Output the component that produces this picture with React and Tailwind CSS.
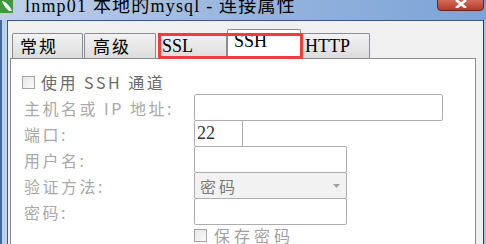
import React from 'react';

const serif = "font-['Liberation_Serif','Noto_Sans_CJK_SC',serif]";
const cjk = "font-['Noto_Sans_CJK_SC','Noto_Sans',sans-serif]";

const Tab = ({ label, className = '', textClass = '' }) => (
  <div
    className={`h-[25px] border border-b-0 border-[#898c95] rounded-t-[2px] bg-gradient-to-b from-[#f3f3f3] to-[#dcdcdc] text-black ${className}`}
  >
    <div className={`leading-[18px] ${textClass}`}>{label}</div>
  </div>
);

const Field = ({ label, children, className = '' }) => (
  <div className={`flex items-center ${className}`}>
    <div className={`w-[170px] shrink-0 text-[16px] tracking-[2.5px] text-[#a8a8a8] leading-[20px] ${cjk}`}>{label}</div>
    {children}
  </div>
);

const Box = ({ className = '' }) => (
  <div className={`h-[13px] w-[13px] border border-[#a4a4a4] bg-gradient-to-br from-[#e6e6e6] to-[#fbfbfb] ${className}`} />
);

export default function App() {
  return (
    <div className="w-[486px] h-[244px] overflow-hidden flex flex-col bg-gradient-to-r from-[#bfd1e9] via-[#97b5dc] to-[#7ca4d8]">
      {/* title bar */}
      <div className="relative h-[20px] shrink-0 flex items-start">
        <svg width="13" height="13" viewBox="0 0 13 13" className="shrink-0">
          <rect x="0" y="0" width="13" height="13" fill="#3f9a3a" />
          <path d="M2 1 C6 2 10 6 12 11 L9 11 C6 8 3 5 2 1 Z" fill="#ffffff" />
        </svg>
        <div className={`ml-[12px] -mt-[3px] text-[18px] leading-[18px] tracking-[1.2px] text-black ${serif}`}>
          lnmp01 本地的mysql - 连接属性
        </div>
        <div className="absolute right-[2px] top-[-2px] w-[47px] h-[13px] rounded-b-[4px] border border-[#6e2418] bg-gradient-to-b from-[#d97060] to-[#b23a26] flex justify-center">
          <svg width="12" height="8" viewBox="0 0 12 8" className="mt-[1px]">
            <path d="M1 0 L11 8 M11 0 L1 8" stroke="#ffffff" strokeWidth="2.6" />
          </svg>
        </div>
      </div>

      {/* body */}
      <div className="flex-1 flex min-h-0">
        <div className="w-[7px] shrink-0 border-l-2 border-[#4468a4] bg-[#bcd0e8]" />
        <div className="flex-1 flex flex-col border-l border-t border-[#3b5a8c] bg-[#f0f0f0] pl-[2px] pr-[7px] pt-[8px]">
          {/* tabs */}
          <div className={`relative z-10 flex items-end h-[29px] ml-[2px] text-[16px] ${serif}`}>
            <Tab label="常规" className="w-[71px]" textClass={`pl-[7px] pt-[3px] text-[17px] tracking-[2px] ${cjk}`} />
            <Tab label="高级" className="w-[72px] ml-[1px]" textClass={`pl-[8px] pt-[3px] text-[17px] tracking-[2px] ${cjk}`} />
            <Tab label="SSL" className="w-[69px] ml-[2px]" textClass="pl-[3px] pt-[3px] text-[18px]" />
            <div className="w-[74px] h-[30px] -mb-[1px] border border-b-0 border-[#898c95] rounded-t-[2px] bg-white">
              <div className="leading-[18px] pl-[6px] pt-[2px] text-[18px]">SSH</div>
            </div>
            <Tab label="HTTP" className="w-[69px]" textClass="pl-[3px] pt-[3px] text-[18px]" />
            <div className="absolute left-[146px] top-[4px] w-[145px] h-[26px] border-[3px] border-[#f23c3c] pointer-events-none" />
          </div>

          {/* panel */}
          <div className="flex-1 border border-[#898c95] bg-white pl-[13px] pt-[13px]">
            <div className="flex items-center h-[20px] -ml-[2px]">
              <Box />
              <span className={`ml-[6px] text-[16px] tracking-[2.5px] leading-[20px] text-[#6a6a6a] ${cjk}`}>使用 SSH 通道</span>
            </div>
            <Field label="主机名或 IP 地址:" className="mt-[2px]">
              <div className="w-[249px] h-[27px] border border-[#aeaeae] rounded-[2px]" />
            </Field>
            <Field label="端口:" className="-mt-[1px]">
              <div className={`w-[49px] h-[27px] border border-[#aeaeae] rounded-[2px] pl-[2px] text-[18px] leading-[25px] text-[#333333] ${serif}`}>22</div>
            </Field>
            <Field label="用户名:" className="-mt-[1px]">
              <div className="w-[153px] h-[27px] border border-[#aeaeae] rounded-[2px]" />
            </Field>
            <Field label="验证方法:" className="-mt-[1px]">
              <div className="w-[153px] h-[27px] border border-[#aeaeae] rounded-[2px] bg-[#f2f2f2] flex items-center pl-[5px] pr-[6px]">
                <span className={`flex-1 text-[16px] tracking-[3px] text-[#7a7a7a] leading-[20px] ${cjk}`}>密码</span>
                <svg width="7" height="4" viewBox="0 0 7 4">
                  <path d="M0 0 L7 0 L3.5 4 Z" fill="#a0a0a0" />
                </svg>
              </div>
            </Field>
            <Field label="密码:" className="-mt-[1px]">
              <div className="w-[153px] h-[27px] border border-[#aeaeae] rounded-[2px]" />
            </Field>
            <div className="flex items-center h-[18px] mt-[1px] ml-[170px]">
              <Box />
              <span className={`ml-[7px] text-[16px] tracking-[4px] leading-[18px] text-[#a0a0a0] ${cjk}`}>保存密码</span>
            </div>
          </div>
        </div>
        <div className="w-[3px] shrink-0 border-l border-[#1f3a6a] bg-[#a9c3e8]" />
      </div>
    </div>
  );
}
